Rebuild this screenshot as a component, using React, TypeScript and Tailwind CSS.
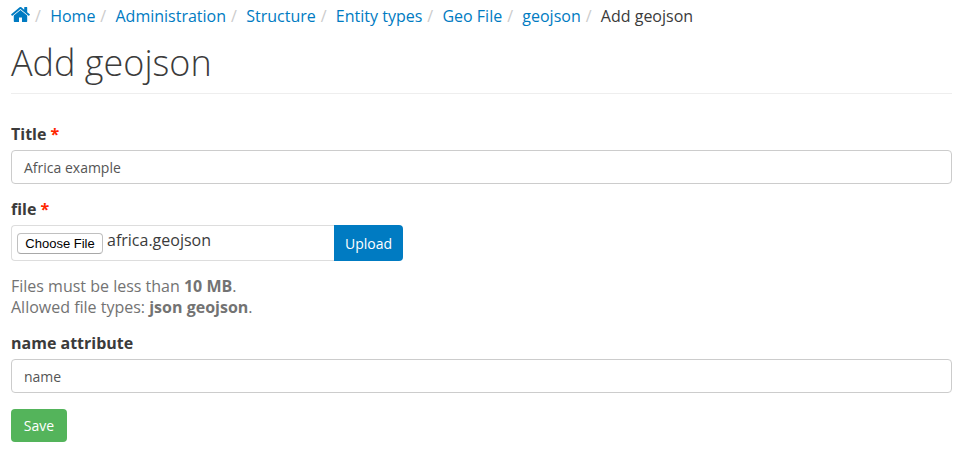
import React from "react";

const crumbs = ["Home", "Administration", "Structure", "Entity types", "Geo File", "geojson"];

function HomeIcon() {
  return (
    <svg className="mt-[7px] h-[15px] w-[19px] shrink-0" viewBox="33 248 1599 1288" fill="currentColor" aria-hidden="true">
      <path d="M1408 992v480q0 26-19 45t-45 19h-384v-384h-256v384h-384q-26 0-45-19t-19-45v-480q0-1 .5-3t.5-3l575-474 575 474q1 2 1 6zm223-69l-62 74q-8 9-21 11h-3q-13 0-21-7l-692-577-692 577q-12 8-24 7-13-2-21-11l-62-74q-8-10-7-23.5t11-21.5l719-599q32-26 76-26t76 26l244 204v-195q0-14 9-23t23-9h192q14 0 23 9t9 23v408l219 182q10 8 11 21.5t-7 23.5z" />
    </svg>
  );
}

function Slash() {
  return <span className="ml-[5px] mr-[9px] w-[6.15px] shrink-0 text-[#cccccc]">/</span>;
}

function Label({ text, required = false }: { text: string; required?: boolean }) {
  return (
    <label className="block h-[21px] text-base leading-[21px] font-bold">
      {text}
      {required && <span className="text-[#ff2600]"> *</span>}
    </label>
  );
}

function TextInput({ value }: { value: string }) {
  return (
    <div className="mt-[5px] flex h-[34px] items-center rounded-[4px] border border-[#cccccc] px-[12px] pt-[2px] text-[14px] leading-5 text-[#555555]">
      {value}
    </div>
  );
}

export default function App() {
  return (
    <main className="h-[471px] w-[957px] overflow-hidden bg-white pr-[5px] pl-[11px] font-['Open_Sans','Noto_Sans',sans-serif] text-base text-[#3b3b3b]">
      <nav className="flex h-[33px] whitespace-nowrap leading-[33px]">
        <a className="flex text-[#007bc2]"><HomeIcon /></a>
        {crumbs.map((c) => (
          <React.Fragment key={c}>
            <Slash />
            <a className="text-[#007bc2]">{c}</a>
          </React.Fragment>
        ))}
        <Slash />
        <span>Add geojson</span>
      </nav>
      <h1 className="h-[61px] border-b border-[#eeeeee] text-[36px] leading-[60px] font-light">Add geojson</h1>
      <form className="pt-[30px]">
        <Label text="Title" required />
        <TextInput value="Africa example" />
        <div className="mt-[15px]">
          <Label text="file" required />
          <div className="mt-[5px] flex h-[36px]">
            <div className="flex w-[323px] rounded-l-[4px] border border-r-0 border-[#dddddd] pl-[5px]">
              <button type="button" className="mt-[7px] h-[21px] w-[86px] rounded-[4px] border border-[#c0c0c0] border-b-[#a8a8a8] bg-white font-['Liberation_Sans',sans-serif] text-[13px] leading-[19px] text-black">
                Choose File
              </button>
              <span className="ml-[4px] leading-[29px]">africa.geojson</span>
            </div>
            <button type="button" className="w-[69px] rounded-r-[4px] bg-[#007bc2] text-[14px] text-white">Upload</button>
          </div>
        </div>
        <p className="mt-[15px] leading-[21px] text-[#737373]">
          Files must be less than <strong>10 MB</strong>.<br />
          Allowed file types: <strong>json geojson</strong>.
        </p>
        <div className="mt-[15px]">
          <Label text="name attribute" />
          <TextInput value="name" />
        </div>
        <button type="button" className="mt-[16px] block h-[33px] w-[56px] rounded-[4px] bg-[#54b45b] text-[14px] text-white">Save</button>
      </form>
    </main>
  );
}
